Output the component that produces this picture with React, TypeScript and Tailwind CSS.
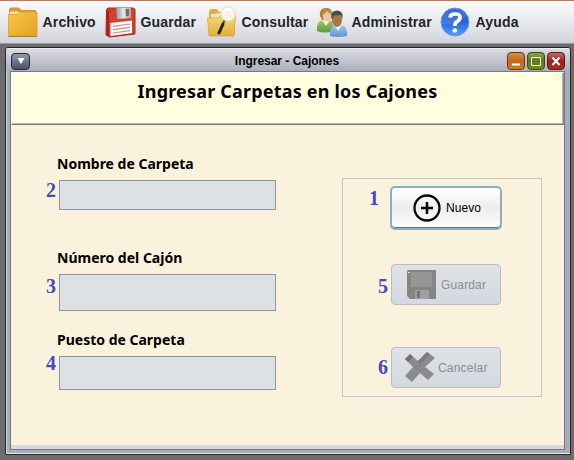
import type { ReactNode } from "react";

function FolderIcon() {
  return (
    <svg width="32" height="32" viewBox="0 0 32 32" className="shrink-0">
      <defs>
        <linearGradient id="folder" x1="0" y1="0" x2="1" y2="1">
          <stop offset="0" stopColor="#f9c64c" />
          <stop offset="1" stopColor="#e6a01e" />
        </linearGradient>
      </defs>
      <path d="M2 8V3L4 1.5H12L14 4H29V8Z" fill="#d9982b" />
      <path d="M3 5.5H11L13 6.5H28V9H3Z" fill="#f2e3bd" />
      <path d="M1.5 8.5H10L13 6H30V30H1.5Z" fill="url(#folder)" stroke="#dda032" strokeWidth=".8" />
      <path d="M1.5 30.5H30" stroke="#a67d34" strokeWidth="1" />
    </svg>
  );
}

function FloppyIcon() {
  return (
    <svg width="32" height="32" viewBox="0 0 32 32" className="shrink-0">
      <defs>
        <linearGradient id="shutter" x1="0" y1="0" x2="1" y2="0">
          <stop offset="0" stopColor="#909597" />
          <stop offset=".5" stopColor="#e8eaea" />
          <stop offset="1" stopColor="#a9adae" />
        </linearGradient>
      </defs>
      <path d="M1.5 3.5L3 2H28.5L30 3.5V28L4.5 31L1 29Z" fill="#d5402c" stroke="#a42b20" />
      <path d="M1.5 4L4 5V30.5L1.5 29Z" fill="#9f261c" />
      <path d="M11 2H26V12L12 13Z" fill="url(#shutter)" />
      <path d="M20.5 3H24V10L21 10.5Z" fill="#6a6f72" />
      <path d="M5.5 17L27 14.5V27L5.5 30Z" fill="#fafafa" />
      <path d="M8 20.3L25 18M8 23.7L25 21.3M8 27L25 24.6" stroke="#cd918a" strokeWidth="1.2" />
    </svg>
  );
}

function SearchFolderIcon() {
  return (
    <svg width="32" height="32" viewBox="0 0 32 32" className="shrink-0">
      <defs>
        <linearGradient id="find" x1="0" y1="0" x2="0" y2="1">
          <stop offset="0" stopColor="#f6d77e" />
          <stop offset="1" stopColor="#e3af38" />
        </linearGradient>
      </defs>
      <path d="M3 5L5 3H11L13 6H29V28H3Z" fill="#dcae4d" />
      <path d="M5 8L28 6V26H5Z" fill="#f8e5ad" />
      <path d="M1.5 12H12L15 9.5H29.5L28 30H3Z" fill="url(#find)" stroke="#d7a238" strokeWidth=".7" />
      <circle cx="22" cy="8" r="7.2" fill="#fbf8ec" fillOpacity=".88" stroke="#e5dfca" />
      <path d="M17 8Q19 3 24 3" fill="none" stroke="#fff" strokeWidth="2" />
      <path d="M18.5 14.5L17 17.5" stroke="#555" strokeWidth="2" />
      <path d="M17 18L13 27" stroke="#202020" strokeWidth="3" strokeLinecap="round" />
    </svg>
  );
}

function UsersIcon() {
  return (
    <svg width="32" height="32" viewBox="0 0 32 32" className="shrink-0">
      <defs>
        <linearGradient id="green" x1="0" y1="0" x2="0" y2="1">
          <stop offset="0" stopColor="#9dca65" />
          <stop offset="1" stopColor="#5d9b3c" />
        </linearGradient>
        <linearGradient id="blue" x1="0" y1="0" x2="0" y2="1">
          <stop offset="0" stopColor="#a4c9ee" />
          <stop offset="1" stopColor="#6094d0" />
        </linearGradient>
      </defs>
      <path d="M1 25Q0 16 6 14L16 15L18 25Q8 28 1 25Z" fill="url(#green)" />
      <path d="M6 14L10 20L14 14Z" fill="#eef4e8" />
      <path d="M4 10Q3 2 10 2Q17 2 16 10L14 14H6Z" fill="#a9813f" />
      <ellipse cx="11" cy="10" rx="4.3" ry="5.5" fill="#efc799" />
      <path d="M6 9Q9 8 11 5Q13 8 16 8Q16 2 10 2Q5 3 6 9" fill="#b28c4d" />
      <path d="M14 30Q13 21 20 19H25Q32 20 31 30Q22 32 14 30Z" fill="url(#blue)" />
      <path d="M18 19L22 25L26 19Z" fill="#eaf2fb" />
      <ellipse cx="21" cy="14" rx="5" ry="7" fill="#a87551" />
      <path d="M16 14Q13 5 21 4.5Q28 5 26.5 13L24.5 9L18 9.5Z" fill="#4e4a46" />
    </svg>
  );
}

function HelpIcon() {
  return (
    <svg width="32" height="32" viewBox="0 0 32 32" className="shrink-0">
      <defs>
        <linearGradient id="help" x1="0" y1="0" x2="0" y2="1">
          <stop offset="0" stopColor="#2055c5" />
          <stop offset=".5" stopColor="#2766dc" />
          <stop offset="1" stopColor="#4fa0f6" />
        </linearGradient>
      </defs>
      <circle cx="15" cy="16" r="14" fill="url(#help)" stroke="#6b9be6" strokeWidth="1" />
      <path d="M1.5 18.5Q15 19.5 27.5 9.5A14 14 0 0 0 1.5 15.5Z" fill="#fff" fillOpacity=".12" />
      <path d="M10 11.5Q10.5 8 15 8Q20 8 20 11.3Q20 14 17 15.7Q14.8 17 14.8 20" fill="none" stroke="#fff" strokeWidth="3.7" />
      <circle cx="14.8" cy="24.5" r="2.3" fill="#fff" />
    </svg>
  );
}

function Tool({ icon, label, className }: { icon: ReactNode; label: string; className: string }) {
  return (
    <div className={`flex shrink-0 items-center whitespace-nowrap ${className}`}>
      {icon}
      <span className="-mt-px ml-[3.5px] text-[14px] leading-5 font-bold tracking-[0.17px] text-[#20242b]">{label}</span>
    </div>
  );
}

function Num({ children, className }: { children: ReactNode; className: string }) {
  return <span className={`font-['Liberation_Serif',serif] text-[20px] leading-5 font-bold text-[#444ab8] ${className}`}>{children}</span>;
}

function Field({ n, label, box, number }: { n: string; label: string; box: string; number: string }) {
  return (
    <div>
      <div className="ml-[12px] font-['Noto_Sans',sans-serif] text-[14px] leading-5 font-bold whitespace-nowrap text-black">{label}</div>
      <div className="mt-[6px] flex items-start">
        <Num className={`w-[14px] pl-px ${number}`}>{n}</Num>
        <div className={`w-[217px] border border-[#8f969e] bg-[#dde0e5] ${box}`} />
      </div>
    </div>
  );
}

export default function App() {
  return (
    <div className="flex h-[460px] w-[574px] flex-col overflow-hidden bg-[#6c6c6c] font-['Liberation_Sans',Arial,sans-serif]">
      <header className="flex h-[44px] shrink-0 items-start border-t border-b border-t-[#b67b65] border-b-[#999ca4] bg-linear-to-b from-[#fafafb] via-[#e8e9ed] to-[#d1d4dc] pt-[5px] pl-[7px]">
        <Tool icon={<FolderIcon />} label="Archivo" className="w-[98px]" />
        <Tool icon={<FloppyIcon />} label="Guardar" className="w-[101px]" />
        <Tool icon={<SearchFolderIcon />} label="Consultar" className="w-[110px]" />
        <Tool icon={<UsersIcon />} label="Administrar" className="w-[124px]" />
        <Tool icon={<HelpIcon />} label="Ayuda" className="w-[90px]" />
      </header>

      <section className="mt-[3px] ml-[5px] flex h-[408px] w-[566px] flex-col rounded-t-[3px] border border-[#25272e] bg-[#a8acb8]">
        <div className="flex h-[23px] shrink-0 items-center rounded-t-[2px] border-t border-[#ececf0] bg-linear-to-b from-[#dadce2] to-[#acb0bd] px-[5px]">
          <div className="mt-[2px] flex h-[17px] w-[19px] items-center justify-center rounded-[4px] border border-[#202734] bg-linear-to-b from-[#9299a7] to-[#48536b]">
            <svg width="8" height="6"><path d="M.5 0H7.5L4 6Z" fill="#fff" /></svg>
          </div>
          <h2 className="flex-1 pt-px pl-[37px] text-center text-[12px] font-bold tracking-[-0.02px] text-black">Ingresar - Cajones</h2>
          <div className="mt-[2px] flex gap-[2px]">
            <div className="h-[18px] w-[18px] rounded-[4px] border border-[#6e3816] bg-linear-to-b from-[#d59049] via-[#c3661a] to-[#d87a1a]">
              <svg width="16" height="16"><path d="M4 11.5H12" stroke="#fff" strokeWidth="2" /></svg>
            </div>
            <div className="h-[18px] w-[18px] rounded-[4px] border border-[#3b4c18] bg-linear-to-b from-[#8ca34e] via-[#5c7817] to-[#718b1d]">
              <svg width="16" height="16"><path d="M3.5 4.5H12.5V12.5H3.5Z" fill="none" stroke="#f8faed" /></svg>
            </div>
            <div className="h-[18px] w-[18px] rounded-[4px] border border-[#5d1719] bg-linear-to-b from-[#c36861] via-[#9b2020] to-[#b1291f]">
              <svg width="16" height="16"><path d="M4.5 4.5L11.5 12M11.5 4.5L4.5 12" stroke="#fff" strokeWidth="2" /></svg>
            </div>
          </div>
        </div>

        <div className="flex min-h-0 flex-1 flex-col border-b border-l border-b-[#e7e9ee] border-l-[#cfd2da] pr-[5px] pb-[3px] pl-[3px]">
          <div className="flex min-h-0 flex-1 flex-col border border-[#737888] bg-[#faf2dd]">
            <div className="h-[53px] shrink-0 border-t border-r border-b border-l border-t-[#fffff8] border-r-[#8c8d82] border-b-[#77786c] border-l-white bg-[#ffffdf] pt-[6px] text-center shadow-[inset_-1px_-1px_0_#b8b8a3,inset_1px_0_0_#ffffff]">
              <h1 className="font-['Noto_Sans',sans-serif] text-[18px] leading-6 font-bold tracking-[0.19px] whitespace-nowrap text-black">Ingresar Carpetas en los Cajones</h1>
            </div>
            <main className="flex flex-1 items-start pt-[29px] pl-[34px]">
              <div className="w-[297px] shrink-0">
                <div className="h-[94px]"><Field n="2" label="Nombre de Carpeta" box="h-[30px]" number="" /></div>
                <div className="h-[82px]"><Field n="3" label="Número del Cajón" box="h-[37px]" number="mt-[2px]" /></div>
                <Field n="4" label="Puesto de Carpeta" box="h-[34px]" number="-mt-[3px]" />
              </div>
              <div className="mt-[24px] h-[219px] w-[200px] shrink-0 border border-[#c8c4c8] pt-[7px]">
                <div className="flex items-start">
                  <Num className="mt-[2px] ml-[26px] w-[21px]">1</Num>
                  <button className="flex h-[44px] w-[112px] items-center rounded-[5px] border-2 border-[#8aafc2] bg-linear-to-b from-white via-[#ededee] to-[#fcfcfc] pl-[21px] shadow-[inset_0_-1px_0_#58758c]">
                    <svg width="28" height="28" viewBox="0 0 28 28"><circle cx="14" cy="14" r="12.5" fill="none" stroke="#080808" strokeWidth="2.3" /><path d="M8 14H20M14 8V20" stroke="#080808" strokeWidth="2.5" /></svg>
                    <span className="ml-[5px] text-[12px] tracking-[0.05px] text-black">Nuevo</span>
                  </button>
                </div>
                <div className="mt-[34px] flex items-start">
                  <Num className="mt-[12px] ml-[34px] w-[14px] pl-px">5</Num>
                  <button className="flex h-[41px] w-[110px] items-center rounded-[4px] border border-[#b9bcc3] bg-linear-to-b from-[#dfe2e6] to-[#d4d8e0] pl-[15px]">
                    <svg width="30" height="30" viewBox="0 0 30 30"><path d="M1 0H29V29H3L0 26V1Z" fill="#858585" /><path d="M4 2H25V17H4Z" fill="#969696" /><path d="M8 20H22V29H8Z" fill="#a0a0a0" /><path d="M10 21H13V28H10Z" fill="#757575" /><path d="M1 2.5H3" stroke="#ddd" /></svg>
                    <span className="ml-[4px] text-[12px] tracking-[0.15px] text-[#8b8d91]">Guardar</span>
                  </button>
                </div>
                <div className="mt-[42px] flex items-start">
                  <Num className="mt-[10px] ml-[34px] w-[14px] pl-px">6</Num>
                  <button className="flex h-[41px] w-[110px] items-center rounded-[4px] border border-[#b9bcc3] bg-linear-to-b from-[#dfe2e6] to-[#d4d8e0] pl-[12px]">
                    <svg width="31" height="31" viewBox="0 0 31 31"><path d="M6 2L14 9L23 0L31 6L21 15L30 22L24 28L16 21L8 30L1 24L9 15L1 7Z" fill="#8b8b8b" /><path d="M1 7L6 2L9 5L4 10Z" fill="#737373" /><path d="M14 9L23 0L26 2.5L15 13Z" fill="#7c7c7c" /></svg>
                    <span className="ml-[3px] text-[12px] tracking-[0.2px] text-[#8b8d91]">Cancelar</span>
                  </button>
                </div>
              </div>
            </main>
            <div className="h-[4px] shrink-0 bg-[#d5d9e0]" />
          </div>
        </div>
      </section>
    </div>
  );
}
